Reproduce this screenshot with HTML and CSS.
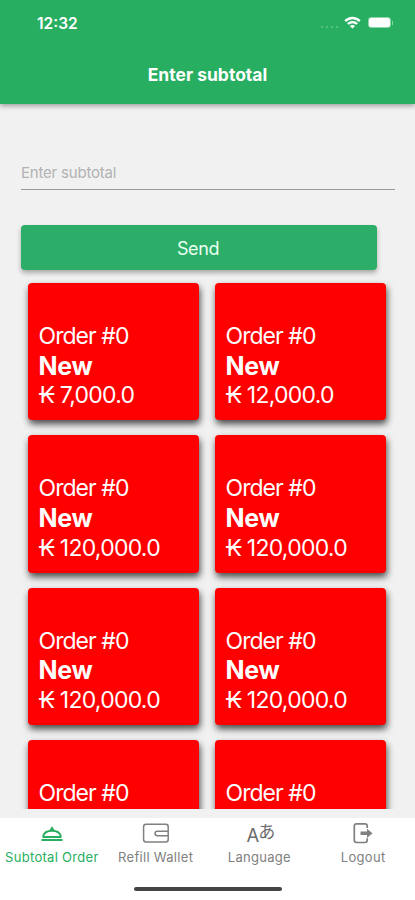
FILE: index.html
```html
<!DOCTYPE html>
<html lang="en">
<head>
<meta charset="utf-8">
<title>Enter subtotal</title>
<link rel="stylesheet" href="styles.css">
</head>
<body>
<div class="app">
  <header class="header">
    <div class="status">
      <span class="time">12:32</span>
      <div class="indicators">
        <span class="signal"><i></i><i></i><i></i><i></i></span>
        <svg class="wifi" width="17" height="13" viewBox="0 0 17 13" fill="none" stroke="#fff" stroke-width="2.4"><path d="M1.200 5.100C5.300 .9 11.700 .9 15.800 5.100M3.900 8C6.500 5.500 10.500 5.500 13.100 8"/><path d="M8.500 12.600L5.900 10Q8.500 7.800 11.100 10Z" fill="#fff" stroke="none"/></svg>
        <span class="battery"></span><span class="nub"></span>
      </div>
    </div>
    <h1 class="title">Enter subtotal</h1>
  </header>
  <main class="content">
    <input class="field" type="text" placeholder="Enter subtotal">
    <button class="send">Send</button>
    <section class="orders">
      <article class="card"><span class="name">Order #0</span><strong>New</strong><span class="price">₭ 7,000.0</span></article>
      <article class="card"><span class="name">Order #0</span><strong>New</strong><span class="price">₭ 12,000.0</span></article>
      <article class="card"><span class="name">Order #0</span><strong>New</strong><span class="price">₭ 120,000.0</span></article>
      <article class="card"><span class="name">Order #0</span><strong>New</strong><span class="price">₭ 120,000.0</span></article>
      <article class="card"><span class="name">Order #0</span><strong>New</strong><span class="price">₭ 120,000.0</span></article>
      <article class="card"><span class="name">Order #0</span><strong>New</strong><span class="price">₭ 120,000.0</span></article>
      <article class="card"><span class="name">Order #0</span></article>
      <article class="card"><span class="name">Order #0</span></article>
    </section>
  </main>
  <footer class="footer">
    <nav class="tabs">
      <a class="tab active">
        <svg width="28" height="24" viewBox="0 0 28 24" fill="none" stroke="currentColor" stroke-width="2"><path d="M3.500 19h21M4.500 16h19M5 15.500C7 7.900 21 7.900 23 15.500"/><path d="M11 9.800L14 5.300L17 9.800Z" fill="currentColor" stroke="none"/></svg>
        <span>Subtotal Order</span>
      </a>
      <a class="tab">
        <svg width="28" height="24" viewBox="0 0 28 24" fill="none" stroke="currentColor" stroke-width="1.500"><rect x="1.600" y="3.200" width="24.600" height="17.900" rx="2.500"/><path d="M26 10.300H15.500Q13 10.300 13 12.500T15.500 14.700H26"/></svg>
        <span>Refill Wallet</span>
      </a>
      <a class="tab">
        <span class="lang"><span>A</span><span class="kana">あ</span></span>
        <span>Language</span>
      </a>
      <a class="tab">
        <svg width="28" height="24" viewBox="0 0 28 24" fill="none" stroke="currentColor" stroke-width="1.700"><path d="M18.200 7V5Q18.200 2.800 16 2.800H7.500Q5.300 2.800 5.300 5V19.300Q5.300 21.500 7.500 21.500H16Q18.200 21.500 18.200 19.300V17.300"/><path d="M11.500 10.600H18V7.700L23.500 12.300L18 16.900V14H11.500Z" fill="currentColor" stroke="none"/></svg>
        <span>Logout</span>
      </a>
    </nav>
    <div class="home"></div>
  </footer>
</div>
</body>
</html>
```

FILE: styles.css
```css
* { box-sizing: border-box; }

body {
  margin: 0;
  background: #f1f1f1;
  font-family: Inter, "Noto Sans CJK JP", sans-serif;
}

.app {
  display: flex;
  flex-direction: column;
  height: 900px;
  overflow: hidden;
}

.header {
  position: relative;
  z-index: 1;
  flex: none;
  height: 104px;
  background: #27ae60;
  color: #fff;
  box-shadow: 0 2px 5px rgba(0, 0, 0, .35);
}

.status {
  display: flex;
  justify-content: space-between;
  align-items: center;
  height: 46px;
  padding: 0 20px 0 37px;
}

.time {
  font-size: 15.500px;
  font-weight: 600;
}

.indicators {
  display: flex;
  align-items: center;
  margin-top: -1px;
}

.signal {
  display: flex;
  gap: 2.500px;
  margin: 9px 6px 0 0;
}

.signal i {
  width: 2.500px;
  height: 2.500px;
  border-radius: 50%;
  background: #62c48d;
}

.battery {
  width: 21px;
  height: 9.500px;
  margin: 0 1.500px 0 8px;
  border-radius: 2.500px;
  background: #fff;
  box-shadow: 0 0 0 1px #8bd5a9;
}

.nub {
  width: 1.500px;
  height: 4px;
  margin-right: 2px;
  background: #8bd5a9;
}

.title {
  margin: 16px 0 0;
  font-size: 17.500px;
  line-height: 26px;
  font-weight: 700;
  text-align: center;
}

.content {
  flex: none;
  height: 705px;
  padding: 51px 20px 0 21px;
  overflow: hidden;
}

.field {
  display: block;
  width: 100%;
  height: 35px;
  padding: 0;
  border: 0;
  border-bottom: 1.500px solid #999;
  border-radius: 0;
  outline: 0;
  background: none;
  font: 15px Inter, sans-serif;
  letter-spacing: -.2px;
}

.field::placeholder { color: #b2b2b2; }

.send {
  display: block;
  width: 356px;
  height: 45px;
  margin-top: 35px;
  padding: 2px 2px 0 0;
  border: 0;
  border-radius: 4px;
  background: #2cae69;
  box-shadow: 0 3px 5px rgba(0, 0, 0, .3);
  color: #eafff2;
  font: 18px Inter, sans-serif;
  letter-spacing: -.4px;
}

.orders {
  display: grid;
  grid-template-columns: 171px 171px;
  grid-auto-rows: 137.400px;
  gap: 15px 16px;
  padding: 13px 0 0 7px;
}

.card {
  display: flex;
  flex-direction: column;
  padding: 39px 10.500px 0;
  border-radius: 4px;
  background: #f00;
  box-shadow: 1px 4px 7px rgba(0, 0, 0, .7);
  color: #fff;
  font-size: 23px;
  line-height: 29.600px;
  font-weight: 400;
  letter-spacing: -.95px;
  white-space: nowrap;
}

.card strong {
  font-size: 25px;
  font-weight: 700;
  letter-spacing: -.3px;
}

.card .price { letter-spacing: -.75px; }

.footer {
  flex: none;
  height: 82px;
  margin-top: 9px;
  padding-top: 3px;
  background: #fff;
}

.tabs {
  display: grid;
  grid-template-columns: repeat(4, 1fr);
}

.tab {
  display: flex;
  flex-direction: column;
  align-items: center;
  color: #808080;
  font-size: 13px;
  line-height: 24px;
  letter-spacing: .3px;
  white-space: nowrap;
}

.tab.active { color: #27ae60; }

.lang {
  display: flex;
  height: 24px;
  padding-left: 2px;
  color: #6c6c6c;
  font-size: 18.500px;
  line-height: 28px;
  letter-spacing: -1px;
}

.kana {
  font-family: "Noto Sans CJK JP", sans-serif;
  font-size: 17px;
  line-height: 20px;
}

.home {
  width: 148px;
  height: 4px;
  margin: 18px 0 0 134px;
  border-radius: 2px;
  background: #444;
}
```
